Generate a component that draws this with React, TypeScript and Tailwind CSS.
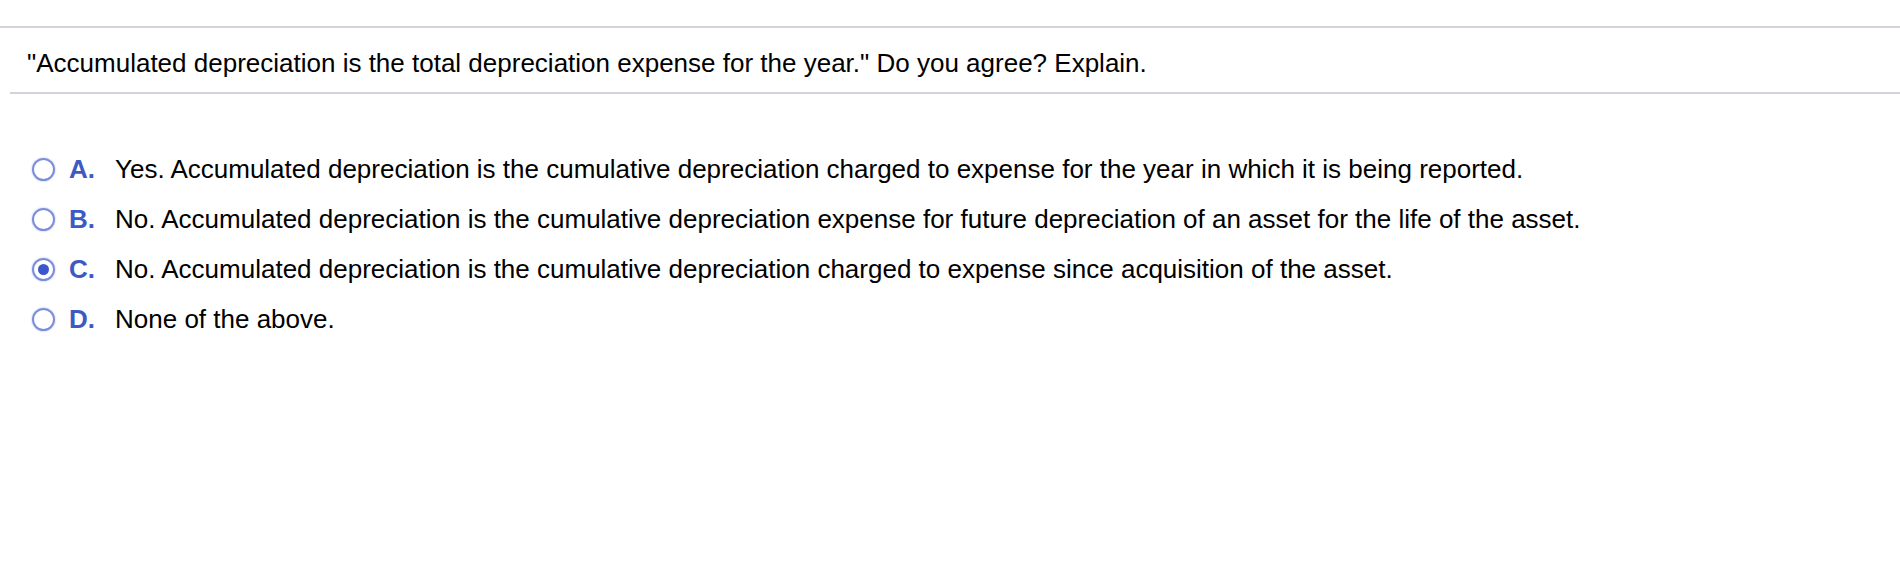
import React from 'react';

const options = [
  { key: 'A', text: 'Yes. Accumulated depreciation is the cumulative depreciation charged to expense for the year in which it is being reported.' },
  { key: 'B', text: 'No. Accumulated depreciation is the cumulative depreciation expense for future depreciation of an asset for the life of the asset.' },
  { key: 'C', text: 'No. Accumulated depreciation is the cumulative depreciation charged to expense since acquisition of the asset.' },
  { key: 'D', text: 'None of the above.' },
];

const Radio: React.FC<{ checked: boolean }> = ({ checked }) => (
  <span className="flex h-[23px] w-[23px] items-center justify-center rounded-full border-2 border-[#7a8cdc] shadow-[0_0_2px_#a3b0ea]">
    {checked && <span className="h-[11px] w-[11px] rounded-full bg-[#3b57cc]" />}
  </span>
);

export default function App() {
  const selected = 'C';
  return (
    <div className="h-[570px] w-[1900px] bg-white pt-[26px] font-['Liberation_Sans',Arial,sans-serif] text-black">
      <div className="border-t-2 border-[#d0d3de]" />
      <div className="ml-[10px] flex h-[66px] items-center border-b-2 border-[#d0d3de] pl-[17px] pt-[6px] text-[26px]">
        "Accumulated depreciation is the total depreciation expense for the year." Do you agree? Explain.
      </div>
      <div className="mt-[50px] flex flex-col">
        {options.map((o) => (
          <div key={o.key} className="flex h-[50px] items-center text-[26px]">
            <div className="ml-[32px] w-[37px]">
              <Radio checked={o.key === selected} />
            </div>
            <span className="w-[46px] font-bold text-[#3d59c3]">{o.key}.</span>
            <span>{o.text}</span>
          </div>
        ))}
      </div>
    </div>
  );
}
